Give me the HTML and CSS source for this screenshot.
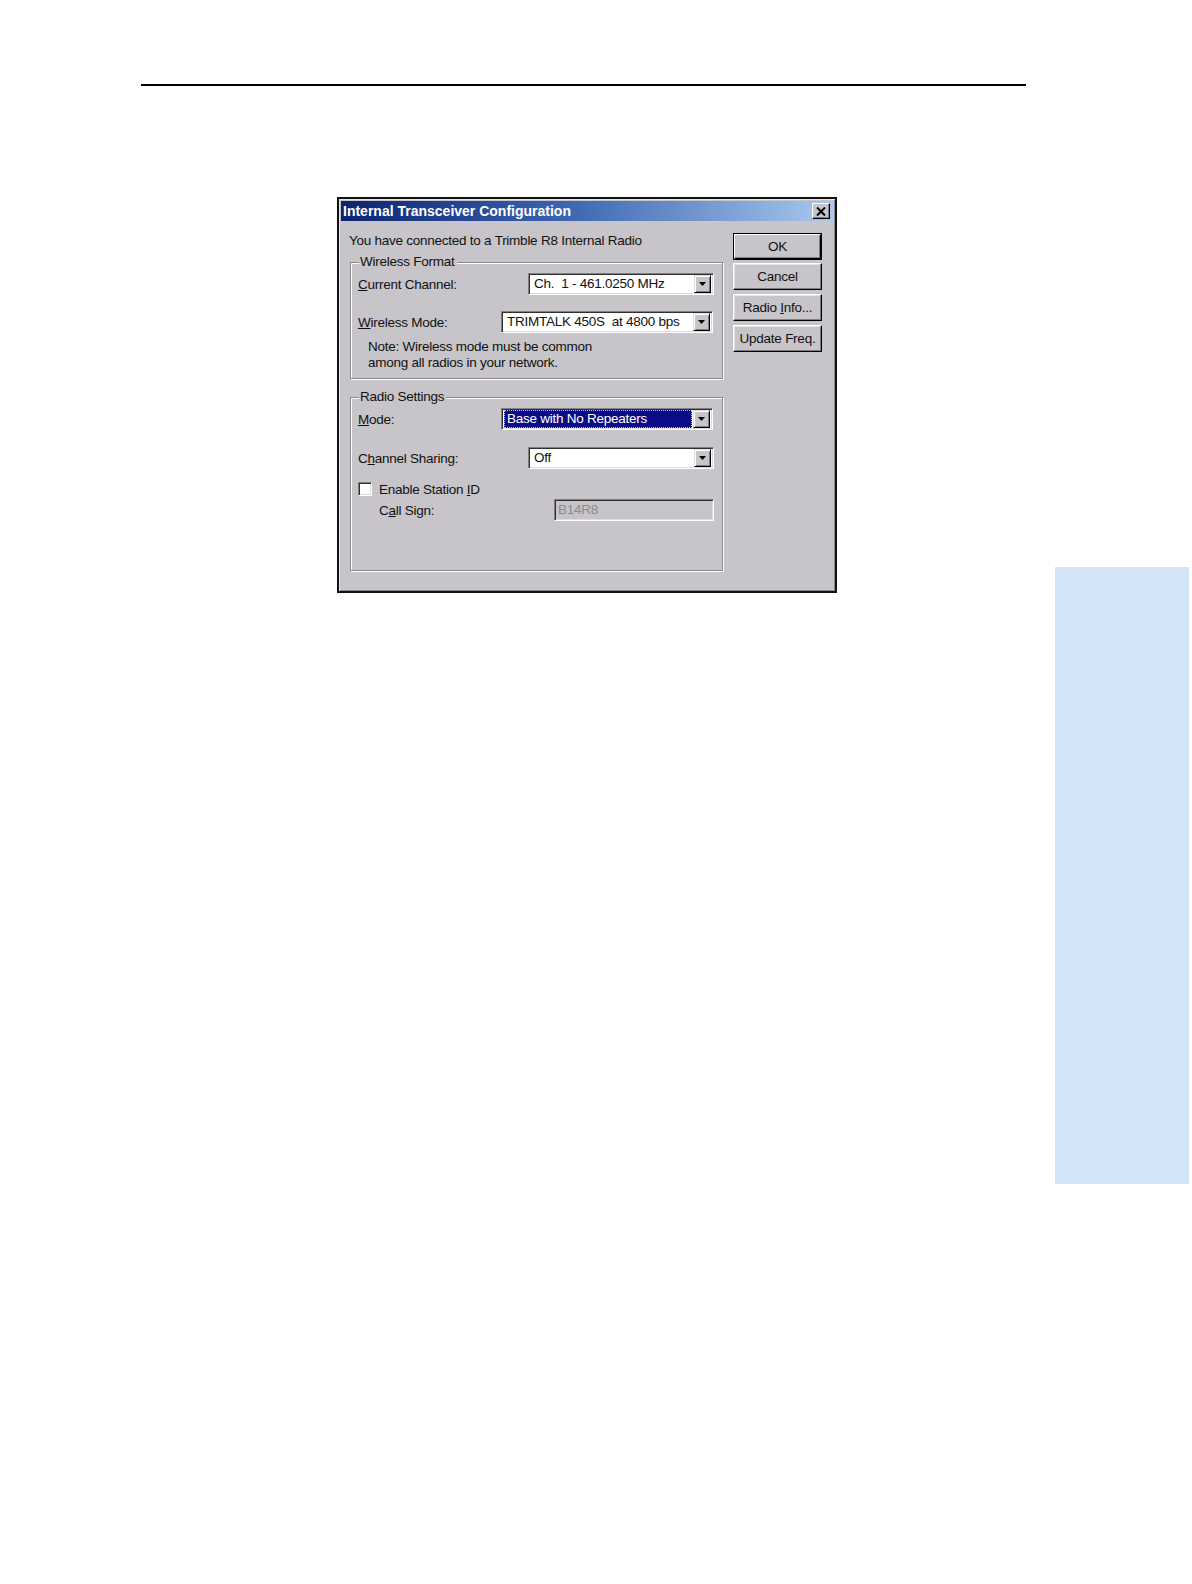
FILE: index.html
```html
<!DOCTYPE html>
<html>
<head>
<meta charset="utf-8">
<link rel="stylesheet" href="styles.css">
</head>
<body>
<div class="page">
  <div class="main">
    <div class="rule"></div>
    <div class="dialog">
      <div class="titlebar">
        <span class="title">Internal Transceiver Configuration</span>
        <span class="close"><svg width="10" height="9" viewBox="0 0 10 9"><path d="M1 0.5 L9 8.5 M9 0.5 L1 8.5" stroke="#000" stroke-width="2"/></svg></span>
      </div>
      <div class="body">
        <div class="left">
          <p class="intro">You have connected to a Trimble R8 Internal Radio</p>
          <div class="group g1">
            <span class="legend">Wireless Format</span>
            <div class="row r-channel">
              <span class="label"><u>C</u>urrent Channel:</span>
              <div class="combo combo-short"><span class="val">Ch.  1 - 461.0250 MHz</span><span class="drop"><svg width="7" height="4" viewBox="0 0 7 4"><path d="M0 0 H7 L3.5 4 Z" fill="#000"/></svg></span></div>
            </div>
            <div class="row r-mode">
              <span class="label"><u>W</u>ireless Mode:</span>
              <div class="combo combo-long"><span class="val">TRIMTALK 450S  at 4800 bps</span><span class="drop"><svg width="7" height="4" viewBox="0 0 7 4"><path d="M0 0 H7 L3.5 4 Z" fill="#000"/></svg></span></div>
            </div>
            <p class="note">Note: Wireless mode must be common<br>among all radios in your network.</p>
          </div>
          <div class="group g2">
            <span class="legend">Radio Settings</span>
            <div class="row r-rmode">
              <span class="label"><u>M</u>ode:</span>
              <div class="combo combo-long"><span class="val sel">Base with No Repeaters</span><span class="drop"><svg width="7" height="4" viewBox="0 0 7 4"><path d="M0 0 H7 L3.5 4 Z" fill="#000"/></svg></span></div>
            </div>
            <div class="row r-share">
              <span class="label">C<u>h</u>annel Sharing:</span>
              <div class="combo combo-short"><span class="val">Off</span><span class="drop"><svg width="7" height="4" viewBox="0 0 7 4"><path d="M0 0 H7 L3.5 4 Z" fill="#000"/></svg></span></div>
            </div>
            <div class="check-row">
              <span class="checkbox"></span>
              <span class="label">Enable Station <u>I</u>D</span>
            </div>
            <div class="row r-call">
              <span class="label">C<u>a</u>ll Sign:</span>
              <div class="textbox">B14R8</div>
            </div>
          </div>
        </div>
        <div class="buttons">
          <div class="btn default"><span class="inner">OK</span></div>
          <div class="btn"><span>Cancel</span></div>
          <div class="btn"><span>Radio <u>I</u>nfo...</span></div>
          <div class="btn"><span>Update Freq.</span></div>
        </div>
      </div>
    </div>
  </div>
  <div class="tab"></div>
</div>
</body>
</html>
```

FILE: styles.css
```css
* { box-sizing: border-box; }
html, body { margin: 0; padding: 0; background: #fff; }
body { font-family: "Liberation Sans", Arial, sans-serif; }

.page { display: flex; width: 1192px; height: 1584px; overflow: hidden; }
.main { width: 1055px; padding-top: 84px; }
.tab { width: 134px; height: 617px; margin-top: 567px; background: #d3e5f6; }

.rule { margin-left: 141px; width: 885px; height: 2px; background: #000; }

.dialog {
  margin-left: 337px; margin-top: 111px;
  width: 500px; height: 396px;
  border: 2px solid #111;
  padding: 2px;
  background: #c7c5c9;
  box-shadow: inset 1px 1px 0 #e6e6e6, inset -1px -1px 0 #8a8a8a;
  font-size: 13.5px; letter-spacing: -0.25px; color: #111;
}

.titlebar {
  height: 20px;
  display: flex; align-items: center; justify-content: space-between;
  background: linear-gradient(to right, #0b2470 0%, #3a64b0 45%, #a8c8ee 100%);
  padding-left: 2px; padding-right: 3px;
}
.title { color: #fff; font-weight: bold; font-size: 14px; letter-spacing: 0; line-height: 20px; }
.close {
  width: 18px; height: 16px; background: #c7c5c9;
  display: flex; align-items: center; justify-content: center;
  border-top: 1px solid #fff; border-left: 1px solid #fff;
  border-right: 1px solid #000; border-bottom: 1px solid #000;
  box-shadow: inset -1px -1px 0 #808080;
}

.body { display: flex; padding: 11px 0 0 8px; }
.left { width: 374px; }
.intro { margin: 0; height: 17px; line-height: 17px; }

.group {
  position: relative;
  margin-left: 1px; width: 373px;
  border: 1px solid #8a8a8a;
  box-shadow: inset 1px 1px 0 #fff, 1px 1px 0 #fff;
  padding: 10px 0 0 7px;
}
.legend {
  position: absolute; top: -9px; left: 8px;
  background: #c7c5c9; padding: 0 2px 0 1px;
  line-height: 16px;
}
.g1 { margin-top: 13px; height: 117px; }
.g2 { margin-top: 18px; height: 174px; }

.row { display: flex; align-items: center; height: 22px; }
.label { white-space: nowrap; }
.combo {
  margin-left: auto;
  height: 22px;
  background: #fff;
  border-top: 1px solid #808080; border-left: 1px solid #808080;
  border-right: 1px solid #fff; border-bottom: 1px solid #fff;
  box-shadow: inset 1px 1px 0 #303030, inset -1px -1px 0 #dcdcdc;
  display: flex; align-items: center; padding: 2px;
}
.combo-short { width: 186px; margin-right: 8px; }
.combo-long { width: 212px; margin-right: 9px; }
.val { flex: 1; white-space: pre; padding-left: 3px; line-height: 18px; height: 18px; }
.val.sel {
  background: #0c0c86; color: #fff;
  outline: 1px dotted #d8d070; outline-offset: -1px;
  margin-right: 1px;
}
.drop {
  width: 17px; height: 18px; background: #c7c5c9;
  border-top: 1px solid #dcdcdc; border-left: 1px solid #dcdcdc;
  border-right: 1px solid #000; border-bottom: 1px solid #000;
  box-shadow: inset 1px 1px 0 #fff, inset -1px -1px 0 #808080;
  display: flex; align-items: center; justify-content: center;
}

.r-mode { margin-top: 16px; }
.note { margin: 6px 0 0 10px; line-height: 16px; }

.r-share { margin-top: 17px; }
.check-row { display: flex; align-items: center; height: 14px; margin-top: 13px; }
.checkbox {
  width: 14px; height: 14px; background: #fff; margin-right: 7px;
  border-top: 1px solid #808080; border-left: 1px solid #808080;
  border-right: 1px solid #fff; border-bottom: 1px solid #fff;
  box-shadow: inset 1px 1px 0 #303030, inset -1px -1px 0 #dcdcdc;
}
.r-call { margin-top: 3px; padding-left: 21px; }
.textbox {
  margin-left: auto; margin-right: 8px;
  width: 160px; height: 22px;
  border-top: 1px solid #808080; border-left: 1px solid #808080;
  border-right: 1px solid #fff; border-bottom: 1px solid #fff;
  box-shadow: inset 1px 1px 0 #303030, inset -1px -1px 0 #dcdcdc;
  color: #8c8a8e; line-height: 20px; padding-left: 3px;
}

.buttons { margin-left: 10px; margin-top: 1px; width: 89px; display: flex; flex-direction: column; gap: 4px; }
.btn {
  height: 27px;
  display: flex; align-items: center; justify-content: center;
  border-top: 1px solid #fff; border-left: 1px solid #fff;
  border-right: 1px solid #000; border-bottom: 1px solid #000;
  box-shadow: inset -1px -1px 0 #808080, inset 1px 1px 0 #e4e4e4;
  white-space: nowrap;
}
.btn.default {
  border: 1px solid #000; box-shadow: none; margin-bottom: -1px;
  padding: 0;
}
.btn.default .inner {
  width: 100%; height: 100%;
  display: flex; align-items: center; justify-content: center;
  border-top: 1px solid #fff; border-left: 1px solid #fff;
  border-right: 1px solid #000; border-bottom: 1px solid #000;
  box-shadow: inset -1px -1px 0 #808080;
}
```
